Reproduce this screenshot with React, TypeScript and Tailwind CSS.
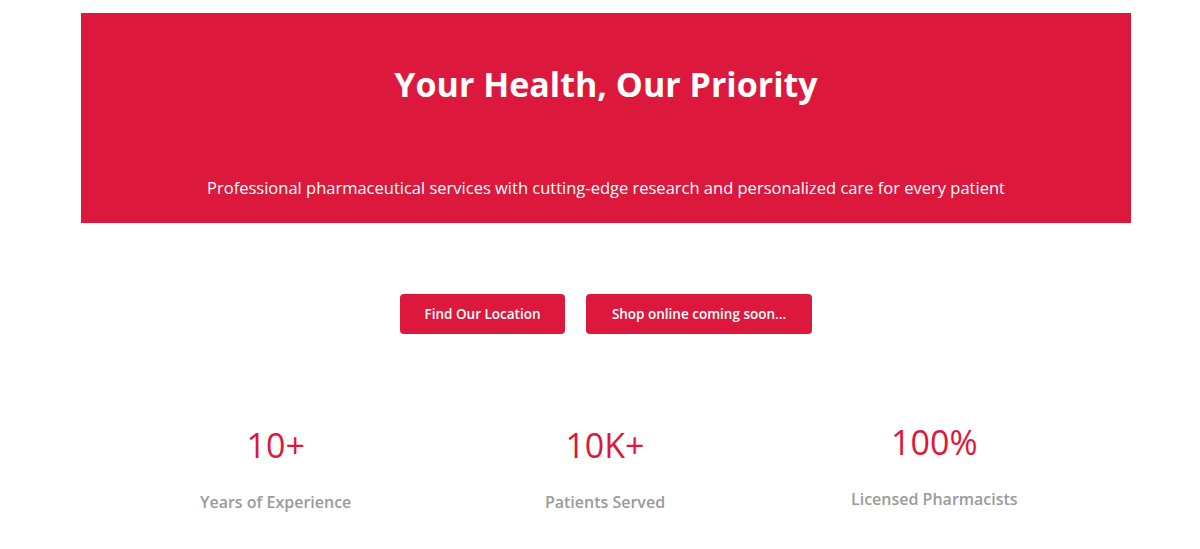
const stats = [
  { value: '10+', label: 'Years of Experience', shift: '' },
  { value: '10K+', label: 'Patients Served', shift: '' },
  { value: '100%', label: 'Licensed Pharmacists', shift: '-mt-[3px]' },
];

export default function App() {
  return (
    <div className="min-h-[549px] bg-white pt-[13px]" style={{ fontFamily: '"Open Sans", "Noto Sans", sans-serif' }}>
      <section className="ml-[81px] flex h-[210px] w-[1050px] flex-col items-center bg-[#dc183c] text-white">
        <h1 className="mt-[54px] text-[34px] font-bold leading-none">Your Health, Our Priority</h1>
        <p className="mt-[79px] text-[16.5px] leading-none">
          Professional pharmaceutical services with cutting-edge research and personalized care for every patient
        </p>
      </section>

      <div className="ml-[81px] mt-[71px] flex w-[1050px] justify-center gap-[21px]">
        <button className="h-10 w-[165px] rounded-sm bg-[#dc183c] text-[13.5px] font-semibold text-white">
          Find Our Location
        </button>
        <button className="h-10 w-[226px] rounded-sm bg-[#dc183c] text-[13.5px] font-semibold text-white">
          Shop online coming soon...
        </button>
      </div>

      <div className="ml-[111px] mt-[94px] grid w-[988px] grid-cols-3 text-center">
        {stats.map((s) => (
          <div key={s.label} className={`flex flex-col items-center ${s.shift}`}>
            <span className="text-[34px] font-medium leading-none text-[#dc183c]">{s.value}</span>
            <span className="mt-[32px] text-[16px] font-semibold leading-none text-[#9a9a9a]">{s.label}</span>
          </div>
        ))}
      </div>
    </div>
  );
}
